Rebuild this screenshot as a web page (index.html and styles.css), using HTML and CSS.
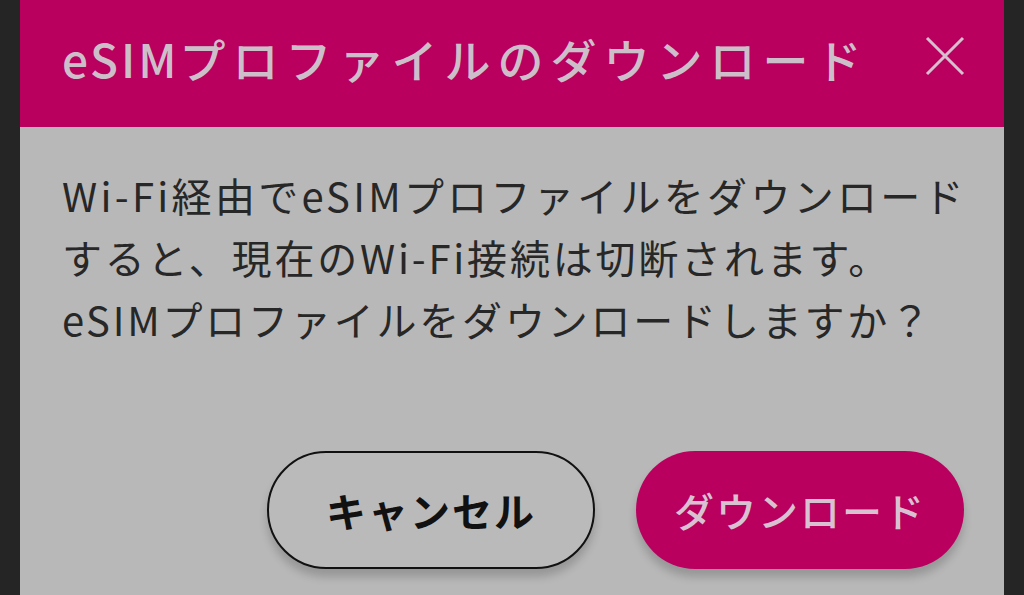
FILE: index.html
```html
<!DOCTYPE html>
<html lang="ja">
<head>
  <meta charset="UTF-8">
  <meta name="viewport" content="width=device-width, initial-scale=1.0">
  <title>eSIMプロファイルのダウンロード</title>
  <link rel="stylesheet" href="styles.css">
</head>
<body>
  <div class="dialog">
    <div class="dialog-head">
      <h1 class="dialog-title"><span class="latin">eSIM</span>プロファイルのダウンロード</h1>
      <button class="close-btn" aria-label="閉じる">
        <svg viewBox="0 0 40 40" width="40" height="40">
          <path d="M2 2 L38 38 M38 2 L2 38" stroke="currentColor" stroke-width="3" fill="none"/>
        </svg>
      </button>
    </div>
    <div class="dialog-body">
      <p class="message">
        <span class="line">Wi-Fi経由でeSIMプロファイルをダウンロード</span>
        <span class="line">すると、現在のWi-Fi接続は切断されます。</span>
        <span class="line">eSIMプロファイルをダウンロードしますか？</span>
      </p>
      <div class="actions">
        <button class="btn btn-outline">キャンセル</button>
        <button class="btn btn-primary">ダウンロード</button>
      </div>
    </div>
  </div>
</body>
</html>
```

FILE: styles.css
```css
* {
  margin: 0;
  padding: 0;
  box-sizing: border-box;
}

body {
  height: 595px;
  overflow: hidden;
  background: #252525;
  font-family: "Noto Sans CJK JP", "Noto Sans", sans-serif;
}

.dialog {
  margin: 0 20px;
  height: 100%;
  background: #b8b8b8;
}

.dialog-head {
  height: 127px;
  display: flex;
  align-items: center;
  justify-content: space-between;
  padding: 0 39px 0 42px;
  background: #b9005f;
}

.dialog-title {
  font-size: 46px;
  font-weight: 500;
  letter-spacing: 7px;
  color: #cdbfca;
  line-height: 1;
  padding-bottom: 12px;
  white-space: nowrap;
}

.dialog-title .latin {
  letter-spacing: 3px;
}

.close-btn {
  border: 0;
  background: none;
  color: #d6c0d0;
  width: 40px;
  height: 40px;
  margin-bottom: 16px;
  display: block;
}

.close-btn svg {
  display: block;
}

.dialog-body {
  padding: 37px 30px 0 42px;
}

.message {
  font-size: 40px;
  line-height: 62px;
  letter-spacing: 2.8px;
  color: #272727;
}

.message .line {
  display: block;
  white-space: nowrap;
}

.message .line:first-child {
  letter-spacing: 3.3px;
}

.actions {
  display: flex;
  justify-content: flex-end;
  gap: 41px;
  margin-top: 101px;
  padding-right: 10px;
}

.btn {
  width: 328px;
  height: 118px;
  border-radius: 59px;
  font-family: inherit;
  font-size: 40px;
  letter-spacing: 2px;
  box-shadow: 0 8px 8px rgba(0, 0, 0, .18);
}

.btn-outline {
  background: #bababa;
  border: 2px solid #111;
  color: #111;
  font-weight: 700;
}

.btn-primary {
  background: #b9005f;
  border: 0;
  color: #d8c2d2;
  font-weight: 500;
}
```
